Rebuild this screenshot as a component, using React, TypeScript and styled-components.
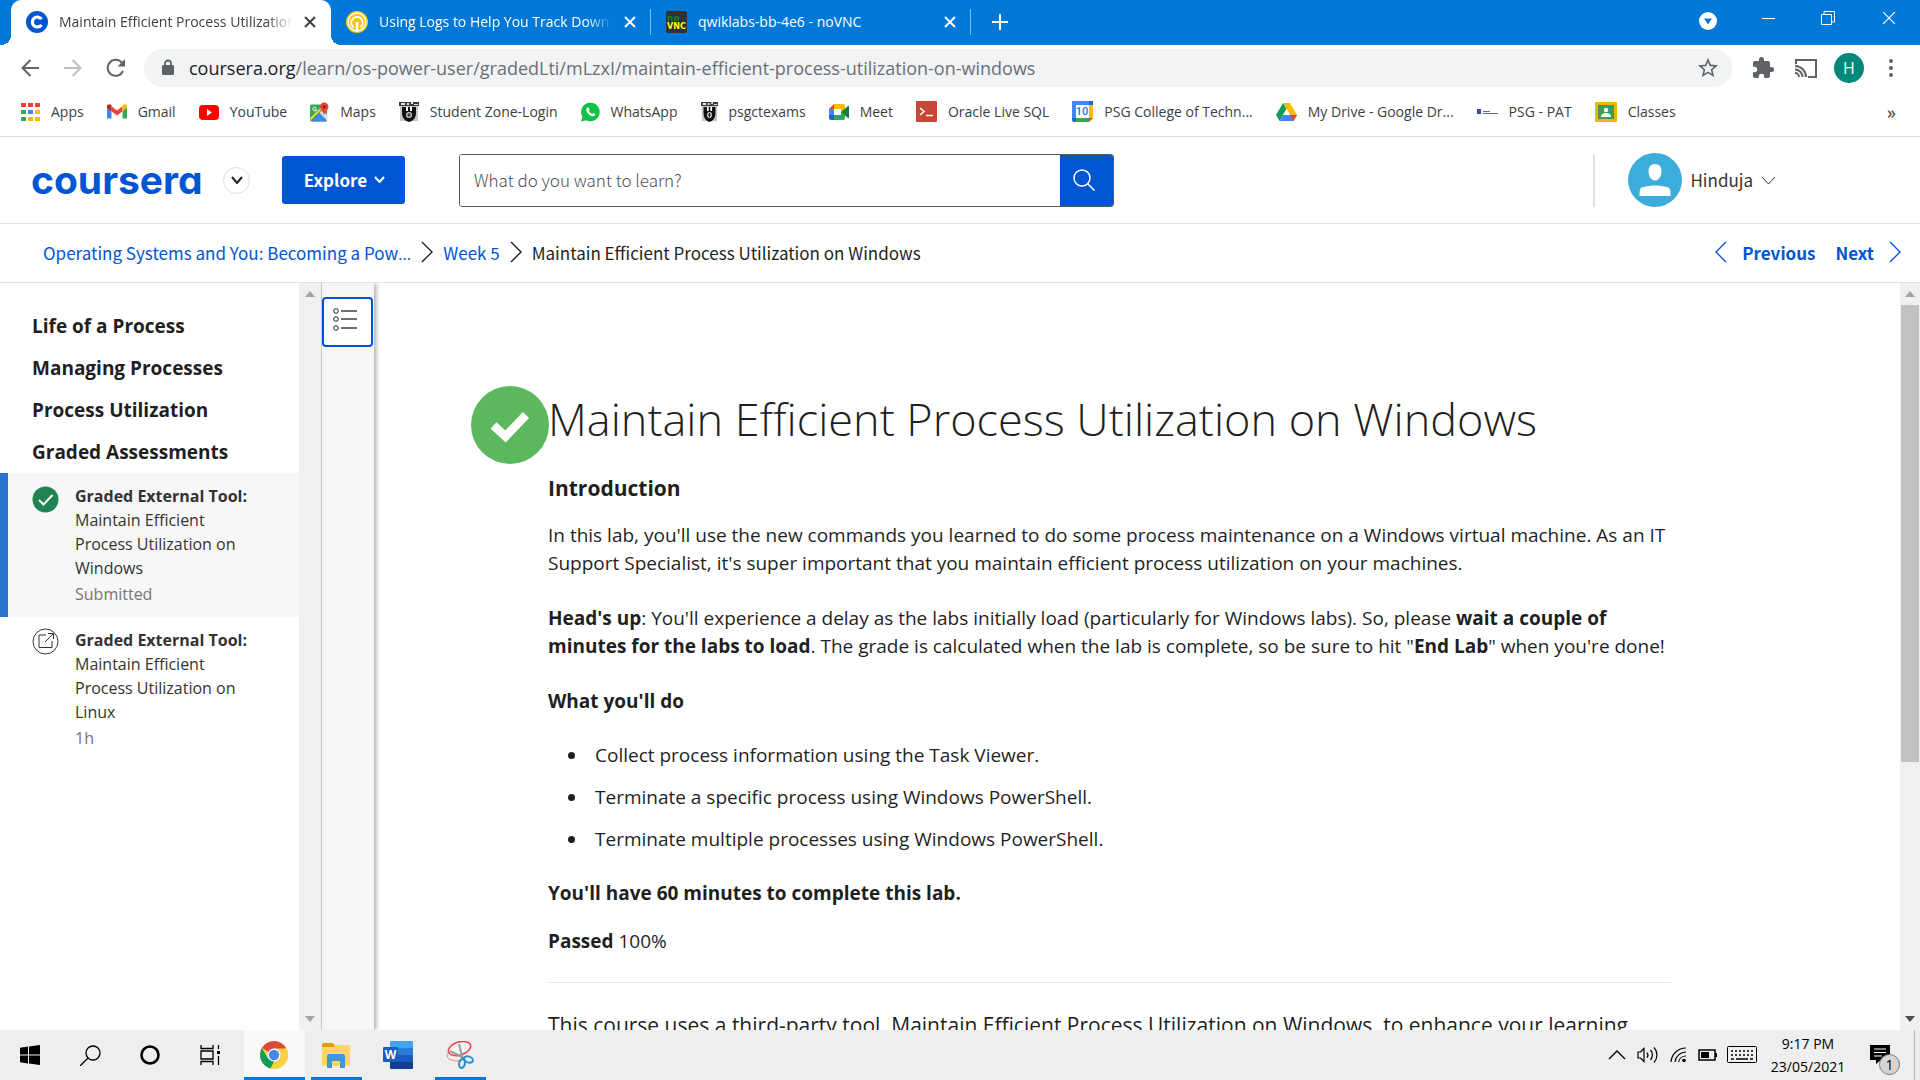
import React from "react";
import styled, { createGlobalStyle, css } from "styled-components";

const ui = `"Open Sans", "Noto Sans", sans-serif`;
const brand = `"Noto Sans CJK SC", "Noto Sans", sans-serif`;
const blue = "#0056d2";

const Global = createGlobalStyle`
  *, *::before, *::after { box-sizing: border-box; }
  html, body, #root { height: 100%; margin: 0; }
  body { font-family: ${ui}; color: #1f1f1f; background: #fff; overflow: hidden; }
  button, input { font: inherit; color: inherit; }
  button { border: 0; padding: 0; background: none; cursor: pointer; }
  a { color: inherit; text-decoration: none; }
  svg { display: block; flex: none; }
`;

const Page = styled.div`
  display: flex;
  flex-direction: column;
  height: 100vh;
`;

/* Browser window */

const TabStrip = styled.div`
  display: flex;
  flex: none;
  height: 45px;
  padding-left: 11px;
  background: #0078d7;
  color: #fff;
`;

const tabFoot = css`
  content: "";
  position: absolute;
  bottom: 0;
  width: 10px;
  height: 10px;
`;

const Tab = styled.div<{ $active?: boolean }>`
  position: relative;
  display: flex;
  align-items: center;
  width: 320px;
  padding: 0 14px 2px 15px;
  font-size: 14px;
  ${(p) =>
    p.$active
      ? css`
          background: #fff;
          color: #3c4043;
          border-radius: 10px 10px 0 0;
          &::before {
            ${tabFoot}
            left: -10px;
            background: radial-gradient(circle at 0 0, transparent 10px, #fff 10px);
          }
          &::after {
            ${tabFoot}
            right: -10px;
            background: radial-gradient(circle at 100% 0, transparent 10px, #fff 10px);
          }
        `
      : css`
          &::after {
            content: "";
            position: absolute;
            right: 0;
            top: 9px;
            height: 26px;
            border-right: 1px solid #7fbbeb;
          }
        `}
`;

const TabTitle = styled.button<{ $fade?: boolean }>`
  flex: 1;
  min-width: 0;
  margin: 0 8px 0 11px;
  overflow: hidden;
  text-align: left;
  white-space: nowrap;
  ${(p) => p.$fade && css`mask-image: linear-gradient(to right, #000 88%, transparent 99%);`}
`;

const IconButton = styled.button<{ $w?: number }>`
  display: flex;
  align-items: center;
  justify-content: center;
  width: ${(p) => p.$w ?? 43}px;
`;

const WindowButtons = styled.div`
  display: flex;
  margin-left: auto;
  padding-bottom: 9px;
`;

const Toolbar = styled.div`
  display: flex;
  align-items: center;
  flex: none;
  height: 48px;
  padding: 0 11px 2px 8px;
  color: #5f6368;
`;

const AddressBar = styled.div`
  display: flex;
  flex: 1;
  align-items: center;
  height: 38px;
  margin: 0 9px 0 7px;
  padding: 0 14px 0 16px;
  border-radius: 19px;
  background: #f1f3f4;
`;

const Address = styled.div`
  flex: 1;
  margin-left: 14px;
  color: #6b6f74;
  font-size: 18px;
  line-height: 28px;
`;

const Host = styled.span`
  color: #202124;
`;

const Profile = styled.button`
  width: 30px;
  height: 30px;
  margin: 0 9px 0 7px;
  border-radius: 50%;
  background: #00897b;
  color: #fff;
  font-size: 16px;
  line-height: 30px;
`;

const Bookmarks = styled.nav`
  display: flex;
  align-items: center;
  flex: none;
  gap: 23px;
  height: 44px;
  padding: 0 24px 6px 20px;
  border-bottom: 1px solid #dadce0;
  color: #3c4043;
  font-size: 14px;
  white-space: nowrap;
`;

const Bookmark = styled.a`
  display: flex;
  align-items: center;
  gap: 11px;
`;

const More = styled.button`
  margin-left: auto;
  font-size: 18px;
  line-height: 20px;
`;

/* Site header */

const Header = styled.header`
  display: flex;
  align-items: center;
  flex: none;
  height: 87px;
  padding: 0 144px 0 31px;
  border-bottom: 1px solid #e1e1e1;
  font-family: ${brand};
  font-size: 17px;
`;

const Wordmark = styled.a`
  width: 173px;
  color: ${blue};
  font: 700 39px/48px Inter, sans-serif;
  font-feature-settings: "cv11";
`;

const RoundButton = styled.button`
  display: flex;
  align-items: center;
  justify-content: center;
  width: 27px;
  height: 30px;
  height: 27px;
  margin: 0 32px 0 19px;
  border: 1px solid #dcdcdc;
  border-radius: 50%;
`;

const Explore = styled.button`
  display: flex;
  align-items: center;
  justify-content: center;
  gap: 7px;
  width: 123px;
  height: 48px;
  padding: 0 0 2px 2px;
  border-radius: 3px;
  background: ${blue};
  color: #fff;
  font-weight: 700;
`;

const Search = styled.form`
  display: flex;
  width: 655px;
  height: 53px;
  margin-left: 54px;
  border: 1px solid #5a5a5a;
  border-radius: 3px;
  overflow: hidden;
`;

const SearchInput = styled.input`
  flex: 1;
  min-width: 0;
  padding: 0 14px 2px;
  border: 0;
  outline: 0;
  font-weight: 300;
  &::placeholder {
    color: #525252;
    opacity: 1;
  }
`;

const SearchButton = styled.button`
  display: flex;
  align-items: center;
  justify-content: center;
  width: 53px;
  padding-right: 6px;
  background: ${blue};
  color: #fff;
`;

const Account = styled.div`
  display: flex;
  align-items: center;
  height: 53px;
  margin-left: auto;
  padding-left: 33px;
  border-left: 2px solid #e1e1e1;
`;

const AccountButton = styled.button`
  display: flex;
  align-items: center;
  gap: 8px;
  color: #333;
`;

const AccountName = styled.span`
  padding-bottom: 2px;
`;

const CrumbBar = styled.nav`
  display: flex;
  align-items: center;
  justify-content: space-between;
  flex: none;
  height: 59px;
  padding: 0 19px 2px 43px;
  border-bottom: 1px solid #e1e1e1;
  font-family: ${brand};
  font-size: 17px;
`;

const Crumbs = styled.div<{ $gap: number }>`
  display: flex;
  align-items: center;
  gap: ${(p) => p.$gap}px;
`;

const Link = styled.a<{ $strong?: boolean }>`
  display: flex;
  align-items: center;
  gap: 15px;
  color: ${blue};
  font-weight: ${(p) => (p.$strong ? 700 : 400)};
`;

const Ellipsis = styled.span`
  font-family: ${ui};
`;

const CrumbText = styled.span`
  display: block;
`;

/* Course body */

const Body = styled.div`
  display: flex;
  flex: 1;
  min-height: 0;
`;

const Sidebar = styled.aside`
  width: 299px;
  padding-top: 22px;
  overflow: hidden;
`;

const Module = styled.a`
  display: block;
  padding-left: 32px;
  font-size: 19px;
  font-weight: 700;
  line-height: 42px;
`;

const Lesson = styled.a<{ $current?: boolean }>`
  display: flex;
  gap: 16px;
  padding: 11px 40px 11px 24px;
  border-left: 8px solid ${(p) => (p.$current ? "#2a73cc" : "transparent")};
  background: ${(p) => (p.$current ? "#f7f7f7" : "none")};
  color: #333;
  font-size: 16px;
  line-height: 24px;
`;

const LessonText = styled.span`
  flex: 1;
`;

const LessonKind = styled.strong`
  display: block;
  white-space: nowrap;
`;

const LessonState = styled.span`
  display: block;
  margin-top: 2px;
  color: #757575;
`;

const Track = styled.div<{ $w: number }>`
  display: flex;
  flex-direction: column;
  align-items: center;
  flex: none;
  width: ${(p) => p.$w}px;
  padding: 8px 0;
  background: #f0f0f0;
`;

const Thumb = styled.div`
  width: 18px;
  height: 457px;
  flex: 0 1 auto;
  margin-top: 8px;
  background: #c1c1c1;
`;

const Spacer = styled.div`
  flex: 1;
`;

const Rail = styled.div`
  flex: none;
  width: 53px;
  padding-top: 14px;
  border-left: 1px solid #c8c8c8;
  background: #f6f6f6;
  box-shadow: 2px 0 5px rgba(0, 0, 0, 0.35);
  clip-path: inset(0 -10px 0 0);
`;

const RailButton = styled.button`
  display: flex;
  align-items: center;
  justify-content: center;
  width: 51px;
  height: 50px;
  padding: 0 6px 4px 0;
  border: 2px solid ${blue};
  border-radius: 4px;
  background: #fff;
`;

const Main = styled.main`
  flex: 1;
  min-width: 0;
  overflow: hidden;
  padding: 103px 229px 0 97px;
`;

const TitleRow = styled.div`
  display: flex;
`;

const Title = styled.h1`
  margin: 0;
  font-size: 45px;
  font-weight: 300;
  line-height: 66px;
`;

const PassMark = styled.div`
  flex: none;
  width: 77px;
  height: 66px;
`;

const Article = styled.article`
  padding-left: 77px;
  font-size: 19px;
  line-height: 28px;
`;

const Intro = styled.h2`
  margin: 22px 0 19px;
  font-size: 21px;
  font-weight: 700;
  line-height: 28px;
`;

const Para = styled.p<{ $gap?: number }>`
  margin: 0 0 ${(p) => p.$gap ?? 27}px;
`;

const Bullets = styled.ul`
  display: grid;
  gap: 14px;
  margin: 0 0 26px;
  padding-left: 40px;
`;

const Bullet = styled.li`
  padding-left: 7px;
`;

const Rule = styled.hr`
  margin: 0 0 26px;
  border: 0;
  border-top: 1px solid #e8e8e8;
`;

const Note = styled.p`
  margin: 0;
  font-size: 21px;
  line-height: 32px;
`;

/* Desktop taskbar */

const Taskbar = styled.footer`
  display: flex;
  flex: none;
  height: 50px;
  background: #eee;
  color: #000;
`;

const Apps = styled.div`
  display: flex;
  gap: 1px;
  margin-left: 4px;
`;

const TaskApp = styled.button<{ $state?: "front" | "open" }>`
  display: flex;
  flex-direction: column;
  align-items: center;
  justify-content: center;
  width: 61px;
  padding: 3px 1px 0 0;
  background: ${(p) => (p.$state === "front" ? "#f9f9f9" : "transparent")};
  &::after {
    content: "";
    width: ${(p) => (p.$state === "front" ? 61 : 51)}px;
    height: 3px;
    margin: 0 -1px 0 0;
    background: ${(p) => (p.$state ? "#0078d7" : "transparent")};
  }
`;

const TaskIcon = styled.span`
  display: flex;
  flex: 1;
  align-items: center;
`;

const Tray = styled.div`
  display: flex;
  align-items: center;
  margin-left: auto;
`;

const Clock = styled.time`
  width: 94px;
  font-size: 14px;
  line-height: 23px;
  text-align: center;
`;

const Notices = styled.button`
  display: flex;
  align-items: center;
  justify-content: center;
  width: 60px;
  height: 50px;
  margin-right: 5px;
  padding-top: 9px;
  border-right: 1px solid #b5b5b5;
`;

/* Icons */

const Close = ({ thin }: { thin?: boolean }) => (
  <svg width={thin ? 14 : 12} height={thin ? 14 : 12} viewBox="0 0 12 12" stroke="currentColor" strokeWidth={thin ? 1 : 2}>
    <path d="M1 1l10 10M11 1L1 11" />
  </svg>
);

const Chevron = ({ w, h, d, sw = 2 }: { w: number; h: number; d: "down" | "up" | "left" | "right"; sw?: number }) => {
  const points = {
    down: `1,1 ${w / 2},${h - 1} ${w - 1},1`,
    up: `1,${h - 1} ${w / 2},1 ${w - 1},${h - 1}`,
    left: `${w - 1},1 1,${h / 2} ${w - 1},${h - 1}`,
    right: `1,1 ${w - 1},${h / 2} 1,${h - 1}`,
  }[d];
  return (
    <svg width={w} height={h} fill="none" stroke="currentColor" strokeWidth={sw}>
      <polyline points={points} />
    </svg>
  );
};

const Arrow = ({ up, dark }: { up?: boolean; dark?: boolean }) => (
  <svg width="10" height="6" fill={dark ? "#505050" : "#a3a3a3"}>
    <path d={up ? "M5 0l5 6H0z" : "M0 0h10L5 6z"} />
  </svg>
);

const CourseraIcon = () => (
  <svg width="22" height="22" viewBox="0 0 22 22">
    <circle cx="11" cy="11" r="11" fill={blue} />
    <path d="M15.500 8.200a5 5 0 1 0 0 5.600" fill="none" stroke="#fff" strokeWidth="3.200" />
  </svg>
);

const QwiklabsIcon = () => (
  <svg width="22" height="22" viewBox="0 0 22 22" fill="none">
    <circle cx="11" cy="11" r="11" fill="#f5c518" />
    <circle cx="11" cy="11" r="9" stroke="#fff" strokeWidth="1.400" />
    <path d="M7.800 16.500a5.800 5.800 0 1 1 6.400 0" stroke="#fff" strokeWidth="1.800" />
    <path d="M11 11v10" stroke="#fff" strokeWidth="2.400" />
  </svg>
);

const NoVncIcon = () => (
  <svg width="21" height="22" viewBox="0 0 21 22" fontFamily="DejaVu Sans" fontWeight="700">
    <rect width="21" height="22" rx="2" fill="#313131" />
    <text x="1" y="10" fontSize="9" fill="#0b8a0b">no</text>
    <text x="1" y="18" fontSize="8" fill="#ff0">VNC</text>
  </svg>
);

const AppsIcon = () => {
  const c = ["#ea4335", "#ea4335", "#ea4335", "#34a853", "#4285f4", "#fbbc04", "#34a853", "#fbbc04", "#fbbc04"];
  return (
    <svg width="20" height="20">
      {c.map((f, i) => (
        <rect key={i} x={1 + (i % 3) * 7} y={1 + Math.floor(i / 3) * 7} width="5" height="4" fill={f} />
      ))}
    </svg>
  );
};

const GmailIcon = () => (
  <svg width="20" height="20" viewBox="0 0 20 20">
    <path d="M0 5v11.500h4.500V8.500z" fill="#4285f4" />
    <path d="M20 5v11.500h-4.500V8.500z" fill="#34a853" />
    <path d="M4.500 4.200L10 8.500l5.500-4.300v5L10 13.500 4.500 9.200z" fill="#ea4335" />
    <path d="M0 4.500C0 2 2.500 1.500 4.500 3.200v6L0 5.800z" fill="#c5221f" />
    <path d="M20 4.500c0-2.500-2.500-3-4.500-1.300v6L20 5.800z" fill="#fbbc04" />
  </svg>
);

const YouTubeIcon = () => (
  <svg width="20" height="20">
    <rect y="3" width="20" height="15" rx="4" fill="#f00" />
    <path d="M8 7l5 3.500L8 14z" fill="#fff" />
  </svg>
);

const MapsIcon = () => (
  <svg width="19" height="20" viewBox="0 0 20 20">
    <rect y="2" width="18" height="18" rx="2" fill="#34a853" />
    <path d="M2 20l8-9 8 9z" fill="#4285f4" />
    <path d="M10 11l3-3 5 5v6z" fill="#dadce0" />
    <path d="M0 18L14 4" stroke="#fbd34b" strokeWidth="2" />
    <path d="M6.500 5.600a2 2 0 1 0 .5 1.600H5" fill="none" stroke="#fff" />
    <path d="M15 0a4.500 4.500 0 0 0-4.500 4.500c0 3 4.500 6 4.500 9.500 0-3.500 4.500-6.500 4.500-9.500A4.500 4.500 0 0 0 15 0z" fill="#ea4335" />
    <circle cx="15" cy="4.500" r="1.600" fill="#8c1a11" />
  </svg>
);

const CrestIcon = ({ w = 20 }: { w?: number }) => (
  <svg width={w} height="20" viewBox="0 0 20 20" preserveAspectRatio="none">
    <path d="M1 4h18v15H1z" fill="#c9c9c9" />
    <path d="M0 0h20v4H0z" fill="#3a3a3a" />
    <path d="M2 1h4v2H2zM8 1h2v2H8zM12 0h2v2h-2zM15 2h4v1h-4z" fill="#e4e4e4" />
    <path d="M3 5h14v6c0 5-3 8-7 9-4-1-7-4-7-9z" fill="#111" />
    <path d="M7 5h2v4H7zM11 5h2v4h-2z" fill="#fff" />
    <circle cx="10" cy="13" r="3" fill="#ccc" />
    <path d="M8 13h4M10 11v4" stroke="#111" />
  </svg>
);

const WhatsAppIcon = () => (
  <svg width="19" height="20" viewBox="0 0 20 20">
    <path d="M0 20l1.500-5A9.800 9.800 0 1 1 5.300 18.600z" fill="#12c143" />
    <path d="M6.500 5.500c.7-.8 1.500-.5 1.800.3l.6 1.500c.1.500-.7 1.100-.7 1.400.8 1.600 1.900 2.600 3.500 3.300.4 0 .9-1 1.400-1l1.700.9c.5.300.3 1.300-.2 1.900-1 1-2.500 1-4.600-.1-2.200-1.200-3.900-3.200-4.400-5.200-.2-1.200.3-2.400.9-3z" fill="#fff" />
  </svg>
);

const MeetIcon = () => (
  <svg width="20" height="20" viewBox="0 0 20 20">
    <path d="M5 2v5H0z" fill="#ea4335" />
    <path d="M5 2h9a2 2 0 0 1 2 2v4l-4 3V7H5z" fill="#fbbc04" />
    <path d="M0 7h5v6H0z" fill="#4285f4" />
    <path d="M0 13h5v5H2a2 2 0 0 1-2-2z" fill="#1967d2" />
    <path d="M5 13h7v-3l4 3v3a2 2 0 0 1-2 2H5z" fill="#34a853" />
    <path d="M12 10l7-6c.5-.4 1 0 1 .5v11c0 .5-.5 1-1 .5z" fill="#188038" />
  </svg>
);

const OracleIcon = () => (
  <svg width="21" height="21">
    <rect width="21" height="21" rx="1" fill="#c74634" />
    <path d="M4 7l4 3.500L4 14M10 14.500h7" fill="none" stroke="#fff" strokeWidth="1.600" />
  </svg>
);

const CalendarIcon = () => (
  <svg width="21" height="21" viewBox="0 0 21 21">
    <path d="M0 0h17v4H0z" fill="#4285f4" />
    <path d="M0 0h4v17H0z" fill="#4285f4" />
    <path d="M17 4h4v13h-4z" fill="#fbbc04" />
    <path d="M4 17h13v4H4z" fill="#34a853" />
    <path d="M0 17h4v4H2a2 2 0 0 1-2-2zM17 0h4v4h-4z" fill="#1967d2" />
    <path d="M17 17h4l-4 4z" fill="#ea4335" />
    <path d="M4 4h13v13H4z" fill="#fff" />
    <text x="10" y="14" fontSize="11" fontWeight="500" textAnchor="middle" fill="#1a73e8" fontFamily="Roboto">10</text>
  </svg>
);

const DriveIcon = () => (
  <svg width="21" height="20" viewBox="0 0 21 20">
    <path d="M7 1h7l7 12h-7z" fill="#fbbc04" />
    <path d="M7 1l3.500 6L3.500 19 0 13z" fill="#0f9d58" />
    <path d="M7 13h14l-3.500 6h-14z" fill="#4285f4" />
    <path d="M14 13h7l-3.500 6z" fill="#ea4335" />
    <path d="M7 13h7l-3.500-6z" fill="#fff" />
  </svg>
);

const PatIcon = () => (
  <svg width="21" height="20">
    <rect y="7" width="4" height="5" fill="#3949ab" />
    <path d="M6 9.500h7M6 11.500h15" stroke="#5c6bc0" />
  </svg>
);

const ClassroomIcon = () => (
  <svg width="22" height="20">
    <rect width="22" height="20" rx="1" fill="#f4b400" />
    <rect x="3" y="3" width="16" height="14" fill="#3f9b57" />
    <circle cx="11" cy="8" r="2.200" fill="#fff" />
    <path d="M6 15c0-3 2.500-4 5-4s5 1 5 4z" fill="#fff" />
  </svg>
);

const ChromeIcon = () => (
  <svg width="28" height="28" viewBox="0 0 28 28">
    <circle cx="14" cy="14" r="14" fill="#fdd04a" />
    <path d="M14 14L1.900 7A14 14 0 0 1 26.100 7z" fill="#db4a3c" />
    <path d="M1.900 7L8 17.500l6 3L10.500 27.500A14 14 0 0 1 1.900 7z" fill="#0f9d58" />
    <path d="M14 7.500h12.400A14 14 0 0 1 14 28l-3.500-.500L20 17.500z" fill="#fdd04a" />
    <circle cx="14" cy="14" r="6.500" fill="#fff" />
    <circle cx="14" cy="14" r="5.200" fill="#4687f4" />
  </svg>
);

const FolderIcon = () => (
  <svg width="28" height="26" viewBox="0 0 28 26">
    <path d="M0 3a2 2 0 0 1 2-2h9l2 3v3H0z" fill="#e09f00" />
    <path d="M0 5h12l2-2h13a1 1 0 0 1 1 1v19a1 1 0 0 1-1 1H1a1 1 0 0 1-1-1z" fill="#ffd665" />
    <path d="M5 26V14a2 2 0 0 1 2-2h14a2 2 0 0 1 2 2v12h-5v-7h-8v7z" fill="#3e96db" />
  </svg>
);

const WordIcon = () => (
  <svg width="30" height="28" viewBox="0 0 30 28">
    <path d="M7 1a1 1 0 0 1 1-1h21a1 1 0 0 1 1 1v6H7z" fill="#41a5ee" />
    <path d="M7 7h23v7H7z" fill="#2b7cd3" />
    <path d="M7 14h23v7H7z" fill="#185abd" />
    <path d="M7 21h23v6a1 1 0 0 1-1 1H8a1 1 0 0 1-1-1z" fill="#103f91" />
    <rect y="6" width="15" height="15" rx="1" fill="#1b5ebe" />
    <text x="7.500" y="17.500" fontSize="12" fontWeight="700" textAnchor="middle" fill="#fff" fontFamily="Open Sans">W</text>
  </svg>
);

const SnipIcon = () => (
  <svg width="28" height="28" viewBox="0 0 28 28" fill="none">
    <path d="M2 12c-3 4 1 8 10 8l5-2" stroke="#f08080" />
    <ellipse cx="13.500" cy="7.500" rx="11.500" ry="6.500" transform="rotate(-17 13.500 7.500)" stroke="#e8484c" strokeWidth="1.600" fill="#f5f5f5" />
    <path d="M4 10l13 6.500M13 3l3.500 14" stroke="#9a9a9a" strokeWidth="2" />
    <path d="M16 16.500l2 2" stroke="#2a8fd0" strokeWidth="3" />
    <ellipse cx="16" cy="22.500" rx="2.800" ry="4.500" stroke="#2a8fd0" strokeWidth="2" transform="rotate(10 16 22.500)" />
    <ellipse cx="22.500" cy="18.500" rx="4.500" ry="3" stroke="#2a8fd0" strokeWidth="2" transform="rotate(20 22.500 18.500)" />
  </svg>
);

const bookmarks: [React.ReactNode, string][] = [
  [<AppsIcon />, "Apps"],
  [<GmailIcon />, "Gmail"],
  [<YouTubeIcon />, "YouTube"],
  [<MapsIcon />, "Maps"],
  [<CrestIcon />, "Student Zone-Login"],
  [<WhatsAppIcon />, "WhatsApp"],
  [<CrestIcon w={17} />, "psgctexams"],
  [<MeetIcon />, "Meet"],
  [<OracleIcon />, "Oracle Live SQL"],
  [<CalendarIcon />, "PSG College of Techn..."],
  [<DriveIcon />, "My Drive - Google Dr..."],
  [<PatIcon />, "PSG - PAT"],
  [<ClassroomIcon />, "Classes"],
];

const tabs: { icon: React.ReactNode; title: string; active?: boolean; fade?: boolean }[] = [
  { icon: <CourseraIcon />, title: "Maintain Efficient Process Utilization", active: true, fade: true },
  { icon: <QwiklabsIcon />, title: "Using Logs to Help You Track Down", fade: true },
  { icon: <NoVncIcon />, title: "qwiklabs-bb-4e6 - noVNC" },
];

const modules = ["Life of a Process", "Managing Processes", "Process Utilization", "Graded Assessments"];

export default function App() {
  return (
    <Page>
      <Global />
      <TabStrip>
        {tabs.map((t) => (
          <Tab key={t.title} $active={t.active}>
            {t.icon}
            <TabTitle $fade={t.fade}>{t.title}</TabTitle>
            <IconButton $w={14} aria-label="Close tab"><Close /></IconButton>
          </Tab>
        ))}
        <IconButton $w={58} aria-label="New tab">
          <svg width="16" height="18" viewBox="0 0 16 18" stroke="#fff" strokeWidth="2"><path d="M8 0v16M0 8h16" /></svg>
        </IconButton>
        <WindowButtons>
          <IconButton $w={60} aria-label="Search tabs">
            <svg width="18" height="26" viewBox="0 0 18 26"><circle cx="9" cy="16" r="9" fill="#fff" /><path d="M5 13.500h8l-4 6z" fill="#0078d7" /></svg>
          </IconButton>
          <IconButton $w={60} aria-label="Minimise">
            <svg width="13" height="13" stroke="#fff"><path d="M0 6.500h13" /></svg>
          </IconButton>
          <IconButton $w={60} aria-label="Restore">
            <svg width="14" height="14" fill="none" stroke="#fff"><path d="M.5 3.500h10v10H.5zM3 3V.5h10.500V11H11" /></svg>
          </IconButton>
          <IconButton $w={62} aria-label="Close"><Close thin /></IconButton>
        </WindowButtons>
      </TabStrip>

      <Toolbar>
        <IconButton aria-label="Back">
          <svg width="18" height="18" fill="none" stroke="currentColor" strokeWidth="2"><path d="M18 9H2M9.500 1L1.500 9l8 8" /></svg>
        </IconButton>
        <IconButton aria-label="Forward">
          <svg width="18" height="18" fill="none" stroke="#bdc1c6" strokeWidth="2"><path d="M0 9h16M8.500 1l8 8-8 8" /></svg>
        </IconButton>
        <IconButton aria-label="Reload">
          <svg width="20" height="20" viewBox="0 0 20 20"><path d="M17 13a8 8 0 1 1-1.300-8.500" fill="none" stroke="currentColor" strokeWidth="2" /><path d="M19 1v7.500h-7.500z" fill="currentColor" /></svg>
        </IconButton>
        <AddressBar>
          <svg width="15" height="18" viewBox="0 0 15 18"><rect x="2" y="6" width="12" height="10" rx="1.500" fill="currentColor" /><path d="M5 7V4.500a3 3 0 0 1 6 0V7" fill="none" stroke="currentColor" strokeWidth="1.800" /></svg>
          <Address><Host>coursera.org</Host>/learn/os-power-user/gradedLti/mLzxI/maintain-efficient-process-utilization-on-windows</Address>
          <IconButton $w={20} aria-label="Bookmark this page">
            <svg width="20" height="20" viewBox="2 2 20 20" fill="currentColor"><path d="M22 9.240l-7.190-.620L12 2 9.190 8.630 2 9.240l5.460 4.730L5.820 21 12 17.270 18.180 21l-1.630-7.030L22 9.240zM12 15.400l-3.760 2.270 1-4.280-3.320-2.880 4.380-.380L12 6.100l1.710 4.040 4.380.380-3.320 2.880 1 4.280L12 15.400z" /></svg>
          </IconButton>
        </AddressBar>
        <IconButton aria-label="Extensions">
          <svg width="22" height="22" viewBox="1 1 22 22" fill="currentColor"><path d="M20.500 11H19V7c0-1.100-.9-2-2-2h-4V3.500a2.500 2.500 0 0 0-5 0V5H4c-1.100 0-2 .9-2 2v3.800h1.500a2.700 2.700 0 0 1 0 5.400H2V20c0 1.100.9 2 2 2h3.800v-1.500a2.700 2.700 0 0 1 5.400 0V22H17c1.100 0 2-.9 2-2v-4h1.500a2.500 2.500 0 0 0 0-5z" /></svg>
        </IconButton>
        <IconButton aria-label="Cast">
          <svg width="22" height="19" viewBox="0 0 22 19" fill="none" stroke="currentColor" strokeWidth="2"><path d="M1 5V1h20v17h-8M0 14a4 4 0 0 1 4 4M0 10.500a7.500 7.500 0 0 1 7.500 7.500M0 7a11 11 0 0 1 11 11" /></svg>
        </IconButton>
        <Profile>H</Profile>
        <IconButton $w={36} aria-label="Menu">
          <svg width="4" height="18" fill="currentColor"><circle cx="2" cy="2" r="2" /><circle cx="2" cy="9" r="2" /><circle cx="2" cy="16" r="2" /></svg>
        </IconButton>
      </Toolbar>

      <Bookmarks aria-label="Bookmarks">
        {bookmarks.map(([icon, label]) => (
          <Bookmark key={label} href="#">{icon}{label}</Bookmark>
        ))}
        <More>»</More>
      </Bookmarks>

      <Header>
        <Wordmark href="#">coursera</Wordmark>
        <RoundButton aria-label="Switch site"><Chevron w={12} h={8} d="down" /></RoundButton>
        <Explore>Explore <Chevron w={11} h={7} d="down" /></Explore>
        <Search onSubmit={(e) => e.preventDefault()}>
          <SearchInput aria-label="Search catalog" placeholder="What do you want to learn?" />
          <SearchButton aria-label="Search">
            <svg width="22" height="22" fill="none" stroke="#fff" strokeWidth="1.500"><circle cx="9" cy="9" r="8" /><path d="M14.500 14.500l7 7" /></svg>
          </SearchButton>
        </Search>
        <Account>
          <AccountButton>
            <svg width="54" height="54" viewBox="0 0 54 54">
              <circle cx="27" cy="27" r="27" fill="#3cadda" />
              <path d="M27 11c4.500 0 6.500 3 6.500 7 0 5-2.500 9.500-6.500 9.500s-6.500-4.500-6.500-9.500c0-4 2-7 6.500-7z" fill="#fff" />
              <path d="M11.500 43c0-6 .5-8 3-8.800C19 33 23 32.500 27 32.500s8 .5 12.500 1.700c2.500.8 3 2.800 3 8.800z" fill="#fff" />
            </svg>
            <AccountName>Hinduja</AccountName>
            <Chevron w={15} h={9} d="down" sw={1} />
          </AccountButton>
        </Account>
      </Header>

      <CrumbBar aria-label="Breadcrumb">
        <Crumbs $gap={10}>
          <Link href="#"><CrumbText>Operating Systems and You: Becoming a Pow<Ellipsis>…</Ellipsis></CrumbText></Link>
          <Chevron w={12} h={22} d="right" sw={1.4} />
          <Link href="#">Week 5</Link>
          <Chevron w={12} h={22} d="right" sw={1.4} />
          <span>Maintain Efficient Process Utilization on Windows</span>
        </Crumbs>
        <Crumbs $gap={20}>
          <Link $strong href="#"><Chevron w={12} h={22} d="left" sw={1.4} />Previous</Link>
          <Link $strong href="#">Next<Chevron w={12} h={22} d="right" sw={1.4} /></Link>
        </Crumbs>
      </CrumbBar>

      <Body>
        <Sidebar>
          {modules.map((m) => <Module key={m} href="#">{m}</Module>)}
          <Lesson $current href="#">
            <svg width="27" height="30" viewBox="0 0 27 30"><circle cx="13.500" cy="15.500" r="13" fill="#1f8354" /><path d="M7 16l4.500 4.500L20.500 11" fill="none" stroke="#fff" strokeWidth="2" /></svg>
            <LessonText>
              <LessonKind>Graded External Tool:</LessonKind>
              Maintain Efficient Process Utilization on Windows
              <LessonState>Submitted</LessonState>
            </LessonText>
          </Lesson>
          <Lesson href="#">
            <svg width="27" height="27" viewBox="0 0 27 27" fill="none" stroke="#333"><circle cx="13.500" cy="13.500" r="12.500" /><path d="M14 7H7v12.500h13V13M13 14l8-8M16 5.500h5.500V11" /></svg>
            <LessonText>
              <LessonKind>Graded External Tool:</LessonKind>
              Maintain Efficient Process Utilization on Linux
              <LessonState>1h</LessonState>
            </LessonText>
          </Lesson>
        </Sidebar>
        <Track $w={22}><Arrow up /><Spacer /><Arrow /></Track>
        <Rail>
          <RailButton aria-label="Toggle outline">
            <svg width="24" height="24" viewBox="0 0 24 24" fill="none" stroke="#222">
              {[3, 11, 20].map((y) => <g key={y}><circle cx="3" cy={y} r="2.300" /><path d={`M8 ${y}h16`} strokeWidth="1.300" /></g>)}
            </svg>
          </RailButton>
        </Rail>
        <Main>
          <TitleRow>
            <PassMark>
              <svg width="78" height="78" viewBox="0 0 78 78"><circle cx="39" cy="39" r="39" fill="#5cb85c" /><path d="M22.500 39.500L34.500 50.500 55 29" fill="none" stroke="#fff" strokeWidth="8.500" /></svg>
            </PassMark>
            <Title>Maintain Efficient Process Utilization on Windows</Title>
          </TitleRow>
          <Article>
            <Intro>Introduction</Intro>
            <Para>In this lab, you'll use the new commands you learned to do some process maintenance on a Windows virtual machine. As an IT Support Specialist, it's super important that you maintain efficient process utilization on your machines.</Para>
            <Para><strong>Head's up</strong>: You'll experience a delay as the labs initially load (particularly for Windows labs). So, please <strong>wait a couple of minutes for the labs to load</strong>. The grade is calculated when the lab is complete, so be sure to hit "<strong>End Lab</strong>" when you're done!</Para>
            <Para $gap={26}><strong>What you'll do</strong></Para>
            <Bullets>
              <Bullet>Collect process information using the Task Viewer.</Bullet>
              <Bullet>Terminate a specific process using Windows PowerShell.</Bullet>
              <Bullet>Terminate multiple processes using Windows PowerShell.</Bullet>
            </Bullets>
            <Para $gap={20}><strong>You'll have 60 minutes to complete this lab.</strong></Para>
            <Para><strong>Passed</strong> 100%</Para>
            <Rule />
            <Note>This course uses a third-party tool, Maintain Efficient Process Utilization on Windows, to enhance your learning</Note>
          </Article>
        </Main>
        <Track $w={20}><Arrow up /><Thumb /><Spacer /><Arrow dark /></Track>
      </Body>

      <Taskbar>
        <IconButton $w={60} aria-label="Start">
          <svg width="20" height="20" viewBox="0 0 20 20"><path d="M0 2.700l8-1.100v7.900H0zM9 1.400L20 0v9.500H9zM0 10.500h8v7.900l-8-1.100zM9 10.500h11V20L9 18.600z" /></svg>
        </IconButton>
        <IconButton $w={60} aria-label="Search">
          <svg width="21" height="21" fill="none" stroke="#000" strokeWidth="1.300"><circle cx="13" cy="8" r="7" /><path d="M8 13l-8 8" /></svg>
        </IconButton>
        <IconButton $w={60} aria-label="Cortana">
          <svg width="20" height="20" fill="none" stroke="#000" strokeWidth="2.600"><circle cx="10" cy="10" r="8.500" /></svg>
        </IconButton>
        <IconButton $w={60} aria-label="Task view">
          <svg width="20" height="20" fill="none" stroke="#000" strokeWidth="1.300"><path d="M1 0v3.500h12V0M1 20v-3.500h12V20M1 6h12v8H1zM18.500 0v4M18.500 11v9" /><path d="M17 6h3v3h-3z" fill="#000" stroke="none" /></svg>
        </IconButton>
        <Apps>
          <TaskApp $state="front" aria-label="Chrome"><TaskIcon><ChromeIcon /></TaskIcon></TaskApp>
          <TaskApp $state="open" aria-label="File Explorer"><TaskIcon><FolderIcon /></TaskIcon></TaskApp>
          <TaskApp aria-label="Word"><TaskIcon><WordIcon /></TaskIcon></TaskApp>
          <TaskApp $state="open" aria-label="Snipping Tool"><TaskIcon><SnipIcon /></TaskIcon></TaskApp>
        </Apps>
        <Tray>
          <IconButton $w={28} aria-label="Show hidden icons"><Chevron w={18} h={10} d="up" sw={1.3} /></IconButton>
          <IconButton $w={32} aria-label="Volume">
            <svg width="21" height="18" fill="none" stroke="#000" strokeWidth="1.200"><path d="M1 6h2.500L7 2.500v13L3.500 12H1zM10 6.500a4 4 0 0 1 0 5M13.500 4a7.500 7.500 0 0 1 0 10M17 1.500a11 11 0 0 1 0 15" /></svg>
          </IconButton>
          <IconButton $w={30} aria-label="Network">
            <svg width="17" height="16" fill="none" stroke="#000" strokeWidth="1.200"><path d="M1 15A15 15 0 0 1 16 1M5 15A11 11 0 0 1 16 5M8.500 15A7.500 7.500 0 0 1 16 9" /><circle cx="14" cy="13.500" r="1.800" fill="#000" stroke="none" /></svg>
          </IconButton>
          <IconButton $w={30} aria-label="Battery">
            <svg width="20" height="12"><path d="M1 1h16v10H1z" fill="none" stroke="#000" strokeWidth="1.500" /><path d="M3 3h8v6H3zM17 4h2v4h-2z" /></svg>
          </IconButton>
          <IconButton $w={38} aria-label="Touch keyboard">
            <svg width="30" height="18" fill="none" stroke="#000"><rect x=".5" y=".5" width="29" height="16" rx="1" /><path d="M4 5h22M4 9h22" strokeDasharray="2 2" strokeWidth="1.500" /><path d="M4 13h3M9 13h12M23 13h3" strokeWidth="1.500" /></svg>
          </IconButton>
          <Clock>9:17 PM<br />23/05/2021</Clock>
          <Notices aria-label="1 new notification">
            <svg width="32" height="32" viewBox="0 0 32 32">
              <path d="M1 1h20v15h-9l-5 4v-4H1z" />
              <path d="M5 5h12M5 8.500h12M5 12h8" stroke="#fff" />
              <circle cx="20.500" cy="20.500" r="10" fill="#d4d4d4" stroke="#777" />
              <text x="20.500" y="25.500" fontSize="14" textAnchor="middle" fontFamily="Open Sans">1</text>
            </svg>
          </Notices>
        </Tray>
      </Taskbar>
    </Page>
  );
}
